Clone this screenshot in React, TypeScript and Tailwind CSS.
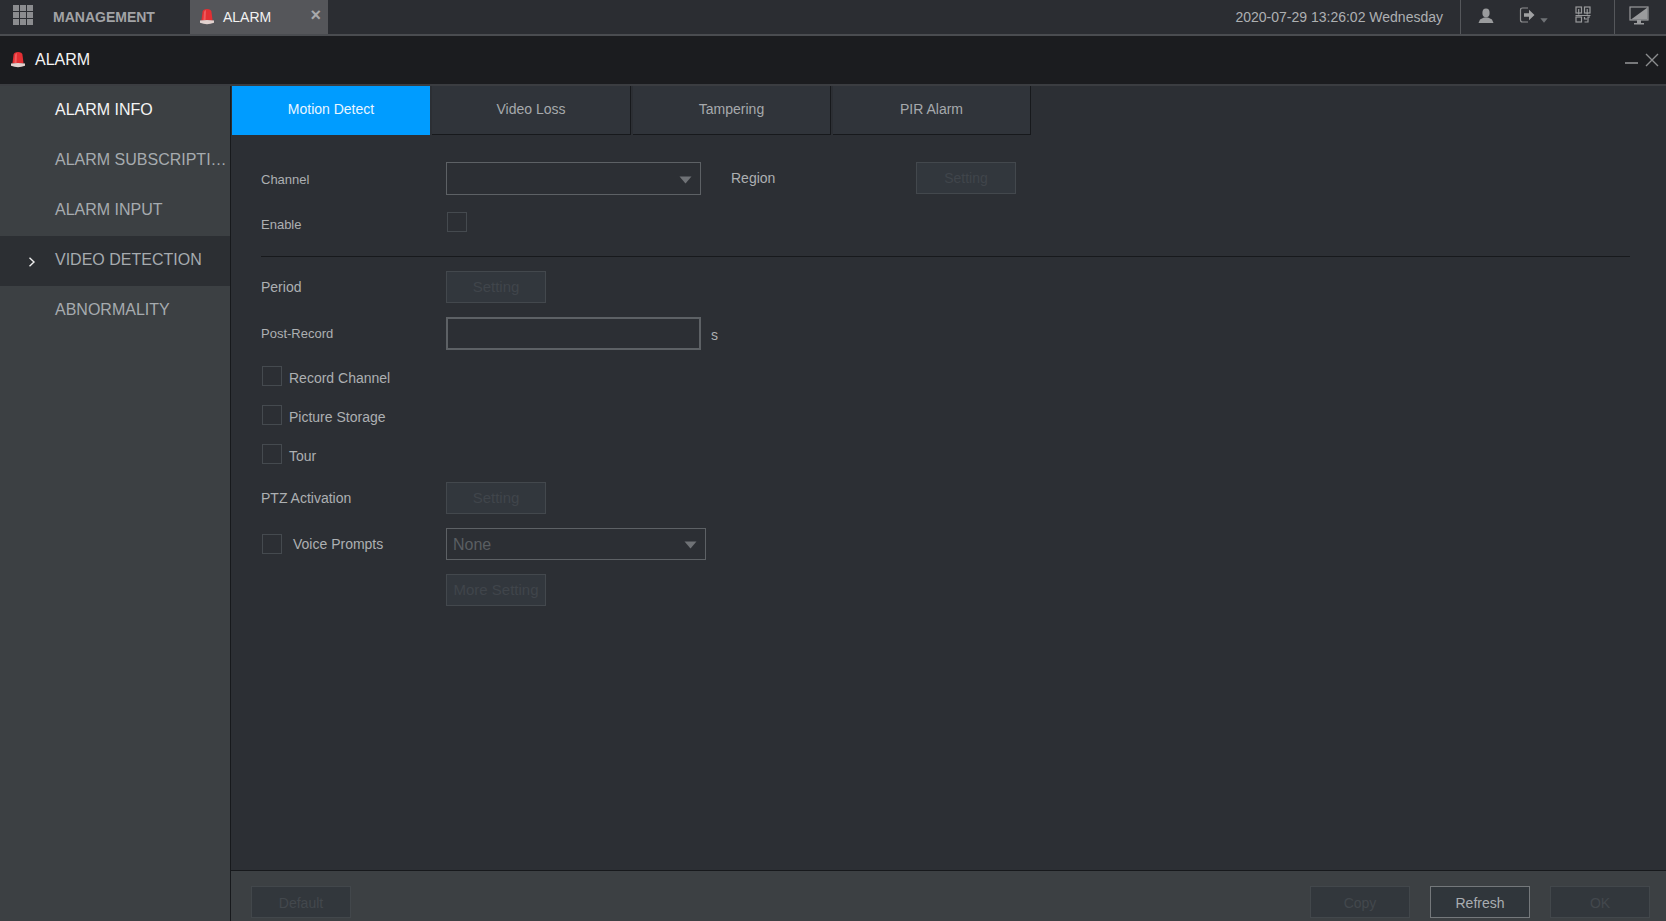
import React from "react";

function Beacon({ size = 18 }: { size?: number }) {
  return (
    <svg width={size} height={size} viewBox="0 0 18 18">
      <path d="M3.4 12.5 L4.6 3.6 Q5 1 9 1 Q13 1 13.4 3.6 L14.6 12.5 Z" fill="#e32f33" />
      <path d="M5.4 12 L6 4 Q6.3 2.3 8 2 L7.6 12 Z" fill="#f05a5c" />
      <path d="M2 12.6 Q9 11.2 16 12.6 L16 14.8 Q9 17.6 2 14.8 Z" fill="#e2d2cf" />
    </svg>
  );
}

function Caret({ className = "" }: { className?: string }) {
  return (
    <svg width="13" height="8" viewBox="0 0 13 8" className={className}>
      <path d="M0.5 0.5 H12.5 L6.5 7.5 Z" fill="#6f7276" />
    </svg>
  );
}

function Check() {
  return <span className="block w-[20px] h-[20px] border border-[#454a4f] shrink-0" />;
}

function DisabledBtn({ label, big = false }: { label: string; big?: boolean }) {
  return (
    <div
      className={`w-[100px] h-[32px] border border-[#43484d] bg-[#32373d] text-[#40454b] flex items-center justify-center whitespace-nowrap ${
        big ? "text-[15px]" : "text-[14px]"
      }`}
    >
      {label}
    </div>
  );
}

function FootBtn({ label, active = false }: { label: string; active?: boolean }) {
  return (
    <div
      className={
        active
          ? "w-[100px] h-[32px] pt-[3px] border border-[#74787b] bg-[#30363b] text-[#a9adb1] text-[14px] flex items-center justify-center"
          : "w-[100px] h-[32px] pt-[3px] border border-[#42474b] bg-[#32373c] text-[#43484d] text-[14px] flex items-center justify-center"
      }
    >
      {label}
    </div>
  );
}

const sideItems = ["ALARM INFO", "ALARM SUBSCRIPTION", "ALARM INPUT", "VIDEO DETECTION", "ABNORMALITY"];

export default function App() {
  return (
    <div
      className="w-[1666px] h-[921px] overflow-hidden flex flex-col bg-[#2c2f34] text-[14px] text-[#adb0b2]"
      style={{ fontFamily: '"Liberation Sans", Arial, sans-serif' }}
    >
      {/* top bar */}
      <div className="h-[36px] shrink-0 flex bg-[#2b2d32] border-b-2 border-[#4a4c50]">
        <div className="w-[190px] flex items-center">
          <svg width="20" height="20" viewBox="0 0 20 20" className="ml-[13px] mb-[4px]" fill="#8b8c8f">
            <rect x="0" y="0" width="6" height="6" /><rect x="7" y="0" width="6" height="6" /><rect x="14" y="0" width="6" height="6" />
            <rect x="0" y="7" width="6" height="6" /><rect x="7" y="7" width="6" height="6" /><rect x="14" y="7" width="6" height="6" />
            <rect x="0" y="14" width="6" height="6" /><rect x="7" y="14" width="6" height="6" /><rect x="14" y="14" width="6" height="6" />
          </svg>
          <span className="ml-[20px] font-bold text-[14px] text-[#a2a3a6]">MANAGEMENT</span>
        </div>
        <div className="w-[138px] bg-[#55565a] flex items-center relative">
          <span className="ml-[8px] mb-[1px]"><Beacon /></span>
          <span className="ml-[7px] text-[14px] text-[#f2f2f2]">ALARM</span>
          <span className="absolute right-[7px] top-[5px] text-[#a8a9ab] font-bold text-[18px] leading-[20px]">×</span>
        </div>
        <div className="flex-1" />
        <div className="flex items-center pr-[17px] text-[14px] text-[#aeb0b2]">2020-07-29 13:26:02 Wednesday</div>
        <div className="w-[154px] border-l border-[#55575b] flex items-center relative">
          <svg width="16" height="16" viewBox="0 0 16 16" className="ml-[17px] mb-[2px]" fill="#9a9b9d">
            <ellipse cx="8" cy="5" rx="3.6" ry="4.4" />
            <path d="M0.5 15 L2 11.4 L6 9.6 H10 L14 11.4 L15.5 15 Z" />
          </svg>
          <svg width="18" height="18" viewBox="0 0 18 18" className="ml-[25px] mb-[5px]">
            <path d="M9 2 H3.5 Q1.5 2 1.5 4 V14 Q1.5 16 3.5 16 H9" fill="none" stroke="#8f9092" strokeWidth="1.2" />
            <path d="M5 7.2 H10 V3.8 L15.5 9 L10 14.2 V10.8 H5 Z" fill="#a0a1a3" />
          </svg>
          <Caret className="ml-[3px] mt-[7px] w-[8px] h-[5px]" />
          <svg width="16" height="18" viewBox="0 0 16 18" className="ml-[27px] mb-[5px]" fill="none" stroke="#98999b" strokeWidth="1.2">
            <rect x="1" y="1" width="5.5" height="6" /><rect x="9.5" y="1" width="5.5" height="6" />
            <rect x="1" y="11" width="5.5" height="5" /><path d="M9.5 16 H13 V11 H15 M9.5 11 V13 H12" />
            <path d="M3.7 3 V8.5 M12.2 3 V8.5 M0.5 9.5 H15.5" />
          </svg>
        </div>
        <div className="w-[52px] border-l border-[#55575b] flex items-center justify-center">
          <svg width="20" height="20" viewBox="0 0 20 20" className="mb-[3px] mr-[3px]">
            <rect x="1" y="1" width="18" height="13" fill="none" stroke="#9a9b9d" strokeWidth="1.2" />
            <path d="M2 13.5 L18.5 1.5 V13.5 Z" fill="#9a9b9d" />
            <path d="M8 14 H12 V17 H15 V18.5 H5 V17 H8 Z" fill="#9a9b9d" />
          </svg>
        </div>
      </div>

      {/* title bar */}
      <div className="h-[50px] shrink-0 flex items-center bg-[#1b1c1f] border-b-2 border-[#3b3d41] relative">
        <span className="ml-[9px] mr-[8px]"><Beacon /></span>
        <span className="text-[16px] text-[#f4f4f4]">ALARM</span>
        <div className="flex-1" />
        <div className="w-[13px] h-[2px] bg-[#77787a] mt-[5px] mr-[7px]" />
        <svg width="14" height="14" viewBox="0 0 14 14" className="mr-[7px]">
          <path d="M1 1 L13 13 M13 1 L1 13" stroke="#8c8d8f" strokeWidth="1.4" fill="none" />
        </svg>
      </div>

      <div className="flex-1 min-h-0 flex">
        {/* sidebar */}
        <div className="w-[231px] shrink-0 bg-[#3c4043] border-r border-[#17191c]">
          {sideItems.map((s, i) => (
            <div
              key={s}
              className={`h-[50px] pb-[2px] flex items-center text-[16px] relative ${i === 3 ? "bg-[#2c2f33]" : ""} ${i === 0 ? "text-[#f4f4f4]" : "text-[#a6abaf]"}`}
            >
              {i === 3 && (
                <svg width="8" height="10" viewBox="0 0 8 10" className="absolute left-[28px] top-[21px]">
                  <path d="M1.5 0.8 L6 5 L1.5 9.2" fill="none" stroke="#eeeeee" strokeWidth="1.4" />
                </svg>
              )}
              <span className="pl-[55px] pr-[3px] truncate">{s}</span>
            </div>
          ))}
        </div>

        {/* main */}
        <div className="flex-1 min-w-0 flex flex-col">
          <div className="flex-1 min-h-0">
            <div className="flex h-[49px] gap-[2px] pl-[1px]">
              <div className="w-[198px] h-[49px] pb-[2px] flex items-center justify-center bg-[#009cff] text-[#eaf6ff]">Motion Detect</div>
              <div className="w-[199px] h-[49px] pb-[2px] flex items-center justify-center bg-[#30343a] border-b border-r border-[#17191c] text-[#a6a9ac]">Video Loss</div>
              <div className="w-[198px] h-[49px] pb-[2px] flex items-center justify-center bg-[#30343a] border-b border-r border-[#17191c] text-[#a6a9ac]">Tampering</div>
              <div className="w-[198px] h-[49px] pb-[2px] flex items-center justify-center bg-[#30343a] border-b border-r border-[#17191c] text-[#a6a9ac]">PIR Alarm</div>
            </div>

            <div className="pl-[30px] pr-[36px] text-[14px]">
              {/* channel */}
              <div className="flex items-center mt-[27px] h-[33px]">
                <span className="w-[185px] pt-[2px] text-[13px]">Channel</span>
                <div className="w-[255px] h-[33px] border border-[#5d6165] flex items-center justify-end pr-[8px]"><Caret className="mt-[3px]" /></div>
                <span className="w-[185px] ml-[30px]">Region</span>
                <div className="self-start"><DisabledBtn label="Setting" /></div>
              </div>
              <div className="flex items-center mt-[15px] h-[24px]">
                <span className="w-[186px] pt-[5px] text-[13px]">Enable</span>
                <Check />
              </div>
              <div className="h-px bg-[#17191c] mt-[22px]" />
              <div className="flex items-center mt-[14px] h-[32px]">
                <span className="w-[185px]">Period</span>
                <DisabledBtn label="Setting" big />
              </div>
              <div className="flex items-center mt-[14px] h-[33px]">
                <span className="w-[185px] pt-[1px] text-[13px]">Post-Record</span>
                <div className="w-[255px] h-[33px] border-2 border-[#5d6165]" />
                <span className="ml-[10px] pt-[3px]">s</span>
              </div>
              {["Record Channel", "Picture Storage", "Tour"].map((t, i) => (
                <div key={t} className={`flex items-center h-[20px] ml-[1px] ${i === 0 ? "mt-[16px]" : "mt-[19px]"}`}>
                  <Check />
                  <span className="ml-[7px] pt-[5px]">{t}</span>
                </div>
              ))}
              <div className="flex items-center mt-[18px] h-[32px]">
                <span className="w-[185px]">PTZ Activation</span>
                <DisabledBtn label="Setting" big />
              </div>
              <div className="flex items-center mt-[14px] h-[32px]">
                <div className="w-[185px] flex items-center pl-[1px]">
                  <Check />
                  <span className="ml-[11px] pt-[1px]">Voice Prompts</span>
                </div>
                <div className="w-[260px] h-[32px] border border-[#5d6165] flex items-center justify-between pl-[6px] pr-[8px] text-[16px] text-[#5a5e62]">
                  <span className="pt-[2px]">None</span>
                  <Caret className="mt-[2px]" />
                </div>
              </div>
              <div className="flex mt-[14px] pl-[185px]">
                <DisabledBtn label="More Setting" big />
              </div>
            </div>
          </div>

          {/* footer */}
          <div className="h-[51px] shrink-0 bg-[#3c4043] border-t border-[#17191c] flex items-start pt-[15px] pl-[20px] pr-[16px] gap-[20px]">
            <FootBtn label="Default" />
            <div className="flex-1" />
            <FootBtn label="Copy" />
            <FootBtn label="Refresh" active />
            <FootBtn label="OK" />
          </div>
        </div>
      </div>
    </div>
  );
}
